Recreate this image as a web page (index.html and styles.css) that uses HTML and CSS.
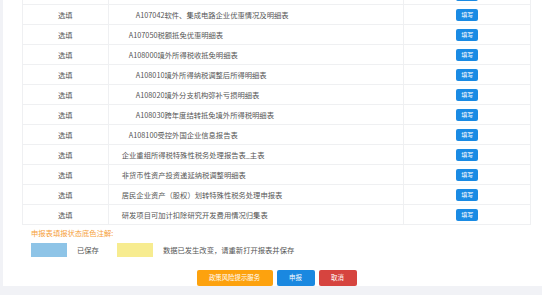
FILE: index.html
```html
<!DOCTYPE html>
<html lang="zh-CN">

<head>
	<meta charset="UTF-8">
	<meta name="viewport" content="width=device-width, initial-scale=1.0">
	<title>申报表填报</title>
	<link rel="stylesheet" href="styles.css">
</head>

<body>
	<div class="page">
		<table class="report-table">
			<colgroup>
				<col class="col-type">
				<col class="col-name">
				<col class="col-action">
			</colgroup>
			<tbody>
				<tr class="scrolled">
					<td></td>
					<td></td>
					<td class="action"><span class="btn-fill"></span></td>
				</tr>
				<tr>
					<td class="type">选填</td>
					<td class="name lv2">A107042软件、集成电路企业优惠情况及明细表</td>
					<td class="action"><button class="btn-fill">填写</button></td>
				</tr>
				<tr>
					<td class="type">选填</td>
					<td class="name lv1">A107050税额抵免优惠明细表</td>
					<td class="action"><button class="btn-fill">填写</button></td>
				</tr>
				<tr>
					<td class="type">选填</td>
					<td class="name lv1">A108000境外所得税收抵免明细表</td>
					<td class="action"><button class="btn-fill">填写</button></td>
				</tr>
				<tr>
					<td class="type">选填</td>
					<td class="name lv2">A108010境外所得纳税调整后所得明细表</td>
					<td class="action"><button class="btn-fill">填写</button></td>
				</tr>
				<tr>
					<td class="type">选填</td>
					<td class="name lv2">A108020境外分支机构弥补亏损明细表</td>
					<td class="action"><button class="btn-fill">填写</button></td>
				</tr>
				<tr>
					<td class="type">选填</td>
					<td class="name lv2">A108030跨年度结转抵免境外所得税明细表</td>
					<td class="action"><button class="btn-fill">填写</button></td>
				</tr>
				<tr>
					<td class="type">选填</td>
					<td class="name lv1">A108100受控外国企业信息报告表</td>
					<td class="action"><button class="btn-fill">填写</button></td>
				</tr>
				<tr>
					<td class="type">选填</td>
					<td class="name">企业重组所得税特殊性税务处理报告表_主表</td>
					<td class="action"><button class="btn-fill">填写</button></td>
				</tr>
				<tr>
					<td class="type">选填</td>
					<td class="name">非货币性资产投资递延纳税调整明细表</td>
					<td class="action"><button class="btn-fill">填写</button></td>
				</tr>
				<tr>
					<td class="type">选填</td>
					<td class="name">居民企业资产（股权）划转特殊性税务处理申报表</td>
					<td class="action"><button class="btn-fill">填写</button></td>
				</tr>
				<tr>
					<td class="type">选填</td>
					<td class="name">研发项目可加计扣除研究开发费用情况归集表</td>
					<td class="action"><button class="btn-fill">填写</button></td>
				</tr>
			</tbody>
		</table>

		<div class="legend">
			<div class="legend-title">申报表填报状态底色注解:</div>
			<div class="legend-items">
				<span class="swatch saved"></span>
				<span class="legend-text">已保存</span>
				<span class="swatch changed"></span>
				<span class="legend-text">数据已发生改变，请重新打开报表并保存</span>
			</div>
		</div>

		<div class="actions">
			<button class="btn btn-risk">政策风险提示服务</button>
			<button class="btn btn-submit">申报</button>
			<button class="btn btn-cancel">取消</button>
		</div>
	</div>
</body>

</html>
```

FILE: styles.css
```css
* {
	margin: 0;
	padding: 0;
	box-sizing: border-box;
}

body {
	font-family: "Noto Sans CJK SC", "Liberation Sans", sans-serif;
	font-size: 7.3px;
	color: #555;
	background: #f1f2f6;
	height: 100vh;
	overflow: hidden;
}

.page {
	margin-left: 3px;
	min-height: 100vh;
	background: #fff;
	padding: 0 11px 0 19px;
}

/* list is scrolled: the first row sits mostly above the top edge */
.report-table {
	width: 509px;
	margin-top: -16px;
	border-collapse: collapse;
}

.col-type {
	width: 86px;
}

.col-name {
	width: 296px;
}

.col-action {
	width: 127px;
}

.report-table td {
	height: 20px;
	border: 1px solid #eff0f2;
	line-height: 12px;
	white-space: nowrap;
}

.type {
	text-align: center;
}

.name {
	padding-left: 13px;
}

.name.lv1 {
	padding-left: 20px;
}

.name.lv2 {
	padding-left: 27px;
}

.action {
	text-align: center;
}

.btn-fill {
	display: inline-block;
	width: 22px;
	height: 12px;
	line-height: 12px;
	vertical-align: middle;
	font-family: inherit;
	font-size: 6px;
	color: #fff;
	background: #1a8be4;
	border: none;
	border-radius: 2px;
}

.legend {
	padding: 3px 0 0 9px;
}

.legend-title {
	color: #f6a13a;
	line-height: 10px;
}

.legend-items {
	display: flex;
	align-items: center;
	margin-top: 5px;
}

.swatch {
	width: 36px;
	height: 14px;
}

.swatch.saved {
	background: #8ec4e7;
}

.swatch.changed {
	background: #f7ec90;
	margin-left: 18px;
}

.legend-text {
	margin-left: 10px;
	color: #555;
}

.actions {
	width: 509px;
	display: flex;
	justify-content: center;
	gap: 4px;
	margin-top: 13px;
}

.btn {
	height: 16px;
	line-height: 16px;
	font-family: inherit;
	font-size: 6.4px;
	color: #fff;
	border: none;
	border-radius: 2px;
}

.btn-risk {
	width: 76px;
	background: #fda20e;
}

.btn-submit {
	width: 38px;
	background: #1a88e0;
}

.btn-cancel {
	width: 38px;
	background: #d6443f;
}
```
